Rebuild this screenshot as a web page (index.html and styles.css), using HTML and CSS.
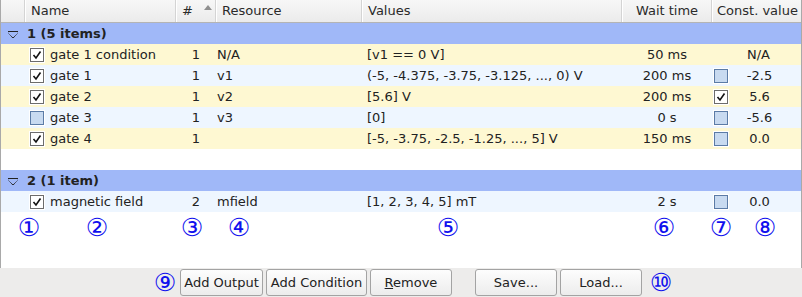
FILE: index.html
```html
<!DOCTYPE html>
<html lang="en">
<head>
    <meta charset="UTF-8">
    <title>Sequence Editor</title>
    <link rel="stylesheet" href="styles.css">
</head>
<body>
    <div class="tree">
        <div class="head row">
            <div class="hc first"></div>
            <div class="hc">Name</div>
            <div class="hc">#<span class="sort"></span></div>
            <div class="hc">Resource</div>
            <div class="hc">Values</div>
            <div class="hc center">Wait time</div>
            <div class="hc last">Const. value</div>
        </div>

        <div class="group"><span class="arrow"></span>1 (5 items)</div>
        <div class="row yellow">
            <div></div>
            <div class="name"><span class="cb on"></span>gate 1 condition</div>
            <div class="center">1</div>
            <div class="res">N/A</div>
            <div class="vals">[v1 == 0 V]</div>
            <div class="center">50 ms</div>
            <div class="const"><span class="nocb"></span><span class="cv">N/A</span></div>
        </div>
        <div class="row blue">
            <div></div>
            <div class="name"><span class="cb on"></span>gate 1</div>
            <div class="center">1</div>
            <div class="res">v1</div>
            <div class="vals">(-5, -4.375, -3.75, -3.125, ..., 0) V</div>
            <div class="center">200 ms</div>
            <div class="const"><span class="cb"></span><span class="cv">-2.5</span></div>
        </div>
        <div class="row yellow">
            <div></div>
            <div class="name"><span class="cb on"></span>gate 2</div>
            <div class="center">1</div>
            <div class="res">v2</div>
            <div class="vals">[5.6] V</div>
            <div class="center">200 ms</div>
            <div class="const"><span class="cb on"></span><span class="cv">5.6</span></div>
        </div>
        <div class="row blue">
            <div></div>
            <div class="name"><span class="cb"></span>gate 3</div>
            <div class="center">1</div>
            <div class="res">v3</div>
            <div class="vals">[0]</div>
            <div class="center">0 s</div>
            <div class="const"><span class="cb"></span><span class="cv">-5.6</span></div>
        </div>
        <div class="row yellow">
            <div></div>
            <div class="name"><span class="cb on"></span>gate 4</div>
            <div class="center">1</div>
            <div class="res"></div>
            <div class="vals">[-5, -3.75, -2.5, -1.25, ..., 5] V</div>
            <div class="center">150 ms</div>
            <div class="const"><span class="cb"></span><span class="cv">0.0</span></div>
        </div>
        <div class="spacer"></div>

        <div class="group"><span class="arrow"></span>2 (1 item)</div>
        <div class="row blue">
            <div></div>
            <div class="name"><span class="cb on"></span>magnetic field</div>
            <div class="center">2</div>
            <div class="res">mfield</div>
            <div class="vals">[1, 2, 3, 4, 5] mT</div>
            <div class="center">2 s</div>
            <div class="const"><span class="cb"></span><span class="cv">0.0</span></div>
        </div>

        <div class="marks">
            <span>&#9312;</span>
            <span>&#9313;</span>
            <span>&#9314;</span>
            <span>&#9315;</span>
            <span>&#9316;</span>
            <span>&#9317;</span>
            <span>&#9318;</span>
            <span>&#9319;</span>
        </div>
    </div>

    <div class="buttons">
        <span class="mark">&#9320;</span>
        <button class="w83">Add Output</button>
        <button class="w101">Add Condition</button>
        <button class="w82"><u>R</u>emove</button>
        <button class="w82 sep">Save...</button>
        <button class="w82">Load...</button>
        <span class="mark">&#9321;</span>
    </div>
</body>
</html>
```

FILE: styles.css
```css
body {
    margin: 0;
    width: 802px;
    height: 297px;
    background-color: #edeceb;
    font-family: "DejaVu Sans", sans-serif;
    font-size: 13px;
    color: #222;
    overflow: hidden;
}
.tree {
    width: 800px;
    height: 268px;
    background-color: #fff;
    border-left: 1px solid #a9a9a9;
    border-right: 1px solid #a9a9a9;
}
.row {
    display: grid;
    grid-template-columns: 24px 151px 40px 146px 260px 90px 89px;
    height: 21px;
    line-height: 21px;
    white-space: nowrap;
}
.head {
    height: 22px;
    line-height: 22px;
    background: linear-gradient(#f7f7f7, #ebebeb);
    border-bottom: 1px solid #b4b4b4;
    color: #2a2a2a;
}
.hc {
    border-left: 1px solid #fff;
    border-right: 1px solid #d4d4d4;
    padding-left: 5px;
}
.hc.first {
    border-left: none;
}
.hc.center {
    padding-left: 0;
    text-align: center;
}
.hc.last {
    border-right: none;
    padding-left: 4px;
}
.sort {
    display: inline-block;
    width: 0;
    height: 0;
    margin-left: 11px;
    border-left: 4px solid transparent;
    border-right: 4px solid transparent;
    border-bottom: 5px solid #8f8f8f;
    vertical-align: 5px;
}
.group {
    height: 21px;
    line-height: 21px;
    background-color: #a0b8f8;
    font-weight: bold;
    padding-left: 26px;
    position: relative;
}
.arrow {
    position: absolute;
    left: 7px;
    top: 8px;
    width: 10px;
    height: 6px;
    background: linear-gradient(to bottom right, transparent 49%, #222 50%, transparent 62%) right / 50% 100% no-repeat,
                linear-gradient(to bottom left, transparent 49%, #222 50%, transparent 62%) left / 50% 100% no-repeat;
    border-top: 1px solid #222;
}
.yellow {
    background-color: #fef8d2;
}
.blue {
    background-color: #eef6ff;
}
.name {
    display: flex;
    align-items: center;
}
.center {
    text-align: center;
}
.res {
    padding-left: 1px;
}
.vals {
    padding-left: 5px;
}
.const {
    display: flex;
    align-items: center;
}
.cv {
    flex: 1;
    text-align: center;
    padding-right: 16px;
}
.cb, .nocb {
    display: inline-block;
    width: 12px;
    height: 12px;
    margin: 0 6px 0 5px;
    flex: none;
}
.cb {
    border: 1px solid #5b7ba6;
    background-color: #c8daf0;
    box-shadow: 0 0 0 1px #fff;
}
.cb.on {
    border-color: #6c6c6c;
    background-color: #fff;
    background-image: url("data:image/svg+xml,%3Csvg xmlns='http://www.w3.org/2000/svg' width='12' height='12'%3E%3Cpath d='M2.5 6 L5 9 L9.5 2.5' fill='none' stroke='%23111' stroke-width='1.6'/%3E%3C/svg%3E");
}
.const .cb, .const .nocb {
    margin-left: 2px;
}
.spacer {
    height: 21px;
}
.marks {
    display: flex;
    height: 28px;
    align-items: center;
    color: #1010ee;
    font-size: 25px;
    margin-top: 1px;
}
.marks span, .mark {
    width: 20px;
    display: flex;
    justify-content: center;
    flex: none;
}
.marks span:nth-child(1) { margin-left: 18px; }
.marks span:nth-child(2) { margin-left: 48px; }
.marks span:nth-child(3) { margin-left: 75px; }
.marks span:nth-child(4) { margin-left: 27px; }
.marks span:nth-child(5) { margin-left: 189px; }
.marks span:nth-child(6) { margin-left: 196px; }
.marks span:nth-child(7) { margin-left: 37px; }
.marks span:nth-child(8) { margin-left: 24px; }
.buttons {
    display: flex;
    align-items: center;
    height: 29px;
    padding-left: 155px;
}
.mark {
    color: #1010ee;
    font-size: 25px;
    margin-right: 5px;
}
.mark:last-child {
    margin-left: 6px;
}
button {
    height: 27px;
    margin-right: 3px;
    font-family: "DejaVu Sans", sans-serif;
    font-size: 13px;
    color: #222;
    background: linear-gradient(#fdfdfd, #ececec);
    border: 1px solid #a3a3a3;
    border-radius: 3px;
    padding: 0;
}
.w83 { width: 83px; }
.w82 { width: 82px; }
.w101 { width: 101px; }
.sep { margin-left: 20px; }
```
